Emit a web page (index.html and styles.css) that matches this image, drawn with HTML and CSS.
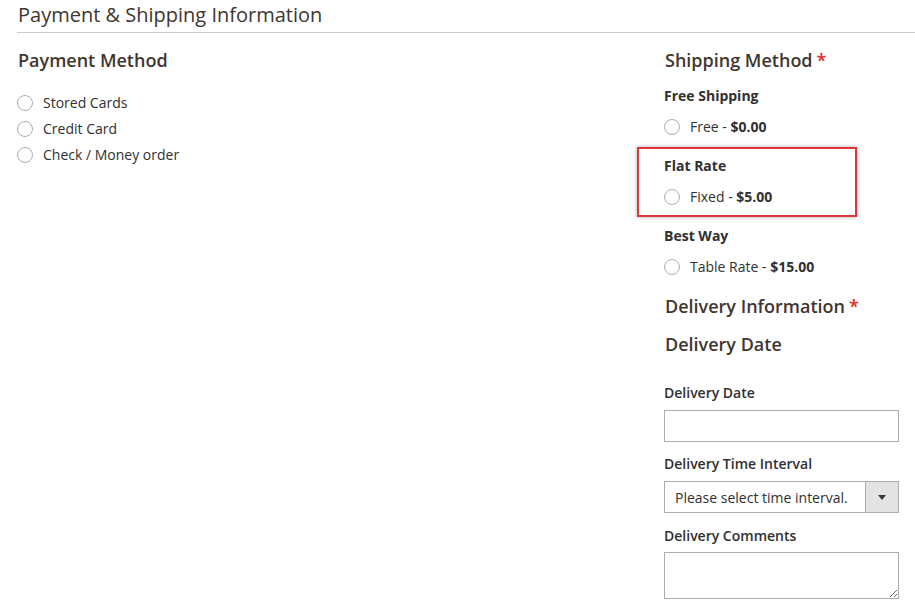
FILE: index.html
```html
<!DOCTYPE html>
<html>
<head>
<meta charset="utf-8">
<link rel="stylesheet" href="styles.css">
</head>
<body>
<div class="page">
  <div class="title">Payment &amp; Shipping Information</div>
  <div class="cols">
    <div class="col-left">
      <div class="heading">Payment Method</div>
      <div class="radios">
        <div class="radio-row"><span class="radio"></span><span>Stored Cards</span></div>
        <div class="radio-row"><span class="radio"></span><span>Credit Card</span></div>
        <div class="radio-row"><span class="radio"></span><span>Check / Money order</span></div>
      </div>
    </div>
    <div class="col-right">
      <div class="heading">Shipping Method<span class="req">*</span></div>
      <div class="group first">
        <div class="carrier">Free Shipping</div>
        <div class="radio-row"><span class="radio"></span><span>Free - <b>$0.00</b></span></div>
      </div>
      <div class="group highlighted">
        <div class="carrier">Flat Rate</div>
        <div class="radio-row"><span class="radio"></span><span>Fixed - <b>$5.00</b></span></div>
        <div class="callout"></div>
      </div>
      <div class="group">
        <div class="carrier">Best Way</div>
        <div class="radio-row"><span class="radio"></span><span>Table Rate - <b>$15.00</b></span></div>
      </div>
      <div class="heading h-info">Delivery Information<span class="req">*</span></div>
      <div class="heading h-date">Delivery Date</div>
      <div class="field-label l-date">Delivery Date</div>
      <div class="input"></div>
      <div class="field-label">Delivery Time Interval</div>
      <div class="select">
        <span class="select-text">Please select time interval.</span>
        <span class="select-arrow"><span class="tri"></span></span>
      </div>
      <div class="field-label l-comments">Delivery Comments</div>
      <textarea class="textarea"></textarea>
    </div>
  </div>
</div>
</body>
</html>
```

FILE: styles.css
```css
* { box-sizing: border-box; }
html, body { margin: 0; padding: 0; background: #fff; }
body {
  font-family: "Open Sans", "Noto Sans", sans-serif;
  font-size: 14px;
  color: #303030;
}
.page { padding-left: 17px; }
.title {
  font-size: 20px;
  line-height: 28px;
  padding: 1px 0 3px 1px;
  color: #41362f;
  border-bottom: 1px solid #cccccc;
}
.cols {
  display: grid;
  grid-template-columns: 1fr 235px;
  padding-right: 16px;
}
.heading {
  font-size: 18px;
  line-height: 24px;
  font-weight: 600;
  color: #41362f;
  margin-top: 15px;
  padding-left: 1px;
}
.req { color: #e22626; margin-left: 4px; }
.radios { margin-top: 18px; }
.radio-row {
  display: flex;
  align-items: center;
  height: 26px;
  line-height: 26px;
  color: #303030;
}
.radio {
  width: 16px;
  height: 16px;
  border: 1px solid #adadad;
  border-radius: 50%;
  background: #fff;
  margin-right: 10px;
  flex: none;
}
.radio-row b { font-weight: 700; }
.group { margin-top: 16px; position: relative; }
.group.first { margin-top: 14px; }
.carrier {
  font-weight: 700;
  line-height: 20px;
  color: #303030;
  margin-bottom: 8px;
}
.callout {
  position: absolute;
  left: -27px;
  top: -9px;
  width: 220px;
  height: 70px;
  border: 2px solid #e0353b;
  box-shadow: 0 0 4px rgba(0, 0, 0, 0.35);
  pointer-events: none;
}
.h-info { margin-top: 14px; }
.h-date { margin-top: 14px; }
.field-label {
  font-weight: 600;
  line-height: 20px;
  color: #303030;
  margin-top: 12px;
  margin-bottom: 7px;
}
.field-label.l-date { margin-top: 27px; }
.field-label.l-comments { margin-top: 13px; margin-bottom: 6px; }
.input {
  height: 32px;
  border: 1px solid #adadad;
  background: #fff;
}
.select {
  height: 32px;
  border: 1px solid #adadad;
  display: flex;
  align-items: stretch;
  margin-top: 1px;
}
.select-text {
  flex: 1;
  line-height: 32px;
  padding-left: 10px;
  color: #303030;
}
.select-arrow {
  width: 33px;
  background: #e3e3e3;
  border-left: 1px solid #adadad;
  display: flex;
  align-items: center;
  justify-content: center;
}
.tri {
  width: 0;
  height: 0;
  border-left: 4px solid transparent;
  border-right: 4px solid transparent;
  border-top: 5px solid #41362f;
}
.textarea {
  display: block;
  width: 100%;
  height: 47px;
  border: 1px solid #adadad;
  margin: 0;
  padding: 0;
  resize: both;
  font-family: inherit;
}
```
